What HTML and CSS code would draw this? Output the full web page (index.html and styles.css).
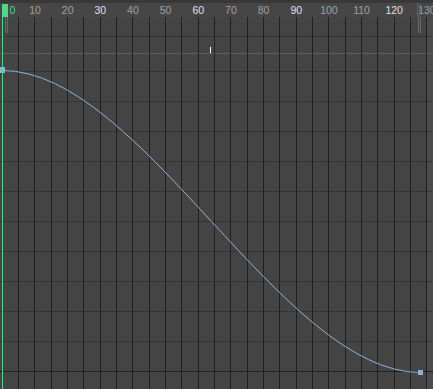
FILE: index.html
```html
<!DOCTYPE html>
<html>
<head>
<meta charset="utf-8">
<link rel="stylesheet" href="styles.css">
</head>
<body>
<div class="editor">
  <div class="ruler">
    <div class="ruler-top"></div>
    <div class="labels">
      <span class="lbl cur">0</span>
      <span class="lbl">10</span>
      <span class="lbl">20</span>
      <span class="lbl major">30</span>
      <span class="lbl">40</span>
      <span class="lbl">50</span>
      <span class="lbl major">60</span>
      <span class="lbl">70</span>
      <span class="lbl">80</span>
      <span class="lbl major">90</span>
      <span class="lbl">100</span>
      <span class="lbl">110</span>
      <span class="lbl major">120</span>
      <span class="lbl">130</span>
    </div>
    <div class="time-block"></div>
    <div class="range-end"></div>
  </div>
  <svg class="graph" width="433" height="372" viewBox="0 0 433 372" xmlns="http://www.w3.org/2000/svg">
    <rect x="427" y="0" width="6" height="372" class="outside"/>
    <g class="hlines">
      <line x1="0" x2="433" y1="19.5" y2="19.5"/>
      <line x1="0" x2="433" y1="54.5" y2="54.5"/>
      <line x1="0" x2="433" y1="84.5" y2="84.5"/>
      <line x1="0" x2="433" y1="114.5" y2="114.5"/>
      <line x1="0" x2="433" y1="144.5" y2="144.5"/>
      <line x1="0" x2="433" y1="174.5" y2="174.5"/>
      <line x1="0" x2="433" y1="204.5" y2="204.5"/>
      <line x1="0" x2="433" y1="234.5" y2="234.5"/>
      <line x1="0" x2="433" y1="264.5" y2="264.5"/>
      <line x1="0" x2="433" y1="294.5" y2="294.5"/>
      <line x1="0" x2="433" y1="324.5" y2="324.5"/>
    </g>
    <line class="zero" x1="0" x2="433" y1="36.5" y2="36.5"/>
    <line class="base" x1="0" x2="433" y1="354.5" y2="354.5"/>
    <g class="vlines">
      <line y1="0" y2="372" x1="18.5" x2="18.5"/>
      <line y1="0" y2="372" x1="34.5" x2="34.5"/>
      <line y1="0" y2="372" x1="51.5" x2="51.5"/>
      <line y1="0" y2="372" x1="67.5" x2="67.5"/>
      <line y1="0" y2="372" x1="83.5" x2="83.5"/>
      <line y1="0" y2="372" x1="100.5" x2="100.5"/>
      <line y1="0" y2="372" x1="116.5" x2="116.5"/>
      <line y1="0" y2="372" x1="132.5" x2="132.5"/>
      <line y1="0" y2="372" x1="149.5" x2="149.5"/>
      <line y1="0" y2="372" x1="165.5" x2="165.5"/>
      <line y1="0" y2="372" x1="181.5" x2="181.5"/>
      <line y1="0" y2="372" x1="198.5" x2="198.5"/>
      <line y1="0" y2="372" x1="214.5" x2="214.5"/>
      <line y1="0" y2="372" x1="230.5" x2="230.5"/>
      <line y1="0" y2="372" x1="247.5" x2="247.5"/>
      <line y1="0" y2="372" x1="263.5" x2="263.5"/>
      <line y1="0" y2="372" x1="279.5" x2="279.5"/>
      <line y1="0" y2="372" x1="296.5" x2="296.5"/>
      <line y1="0" y2="372" x1="312.5" x2="312.5"/>
      <line y1="0" y2="372" x1="328.5" x2="328.5"/>
      <line y1="0" y2="372" x1="345.5" x2="345.5"/>
      <line y1="0" y2="372" x1="361.5" x2="361.5"/>
      <line y1="0" y2="372" x1="377.5" x2="377.5"/>
      <line y1="0" y2="372" x1="394.5" x2="394.5"/>
      <line y1="0" y2="372" x1="410.5" x2="410.5"/>
      <line y1="0" y2="372" x1="426.5" x2="426.5"/>
    </g>
    <g class="range">
      <line x1="5.5" x2="5.5" y1="0" y2="16"/>
      <line x1="7.5" x2="7.5" y1="0" y2="16"/>
      <line x1="418.5" x2="418.5" y1="0" y2="16"/>
      <line x1="420.5" x2="420.5" y1="0" y2="16"/>
    </g>
    <line class="marker" x1="210.5" x2="210.5" y1="30" y2="36"/>
    <path class="curve" d="M2.5 53.5 C141.5 53.5 281.5 355.5 420.5 355.5"/>
    <rect class="key" x="0" y="50" width="5" height="6"/>
    <rect class="key" x="418" y="353" width="5" height="5"/>
    <line class="time" x1="2.5" x2="2.5" y1="0" y2="372"/>
  </svg>
</div>
</body>
</html>
```
FILE: styles.css
```css
html, body {
  margin: 0;
  padding: 0;
  background: #444444;
}

.editor {
  width: 433px;
  height: 389px;
  overflow: hidden;
  display: flex;
  flex-direction: column;
  background: #444444;
}

.ruler {
  position: relative;
  height: 17px;
  flex: none;
  background: #464646;
  display: flex;
  flex-direction: column;
}

.ruler-top {
  height: 3px;
  background: #383838;
}

.labels {
  display: flex;
  margin-left: -14px;
  height: 14px;
  align-items: center;
}

.lbl {
  flex: none;
  width: 32.667px;
  text-align: center;
  font-family: "Liberation Sans", Arial, sans-serif;
  font-size: 10.5px;
  line-height: 14px;
  color: #a0a0a0;
}

.lbl.major {
  color: #e0e0e0;
}

.lbl.cur {
  color: #4fd68a;
  padding-left: 20px;
  box-sizing: border-box;
}

.time-block {
  position: absolute;
  left: 2px;
  top: 4px;
  width: 6px;
  height: 13px;
  background: #4fd68a;
}

.range-end {
  position: absolute;
  left: 418px;
  top: 3px;
  width: 1px;
  height: 14px;
  border-right: 1px solid #646464;
  border-left: 1px solid #646464;
  box-sizing: content-box;
  margin-left: -1px;
}

.graph {
  display: block;
  flex: none;
}

.outside {
  fill: #4b4b4b;
}

.hlines line {
  stroke: #353535;
  stroke-width: 1;
}

.zero {
  stroke: #5e5e5e;
  stroke-width: 1;
}

.base {
  stroke: #222222;
  stroke-width: 1;
}

.vlines line {
  stroke: #1f1f1f;
  stroke-width: 1;
}

.range line {
  stroke: #6a6a6a;
  stroke-width: 1;
}

.marker {
  stroke: #ffffff;
  stroke-width: 1;
}

.curve {
  fill: none;
  stroke: #8fb3d6;
  stroke-width: 1;
}

.key {
  fill: #8fb3d6;
}

.time {
  stroke: #4fd68a;
  stroke-width: 1;
}
```
